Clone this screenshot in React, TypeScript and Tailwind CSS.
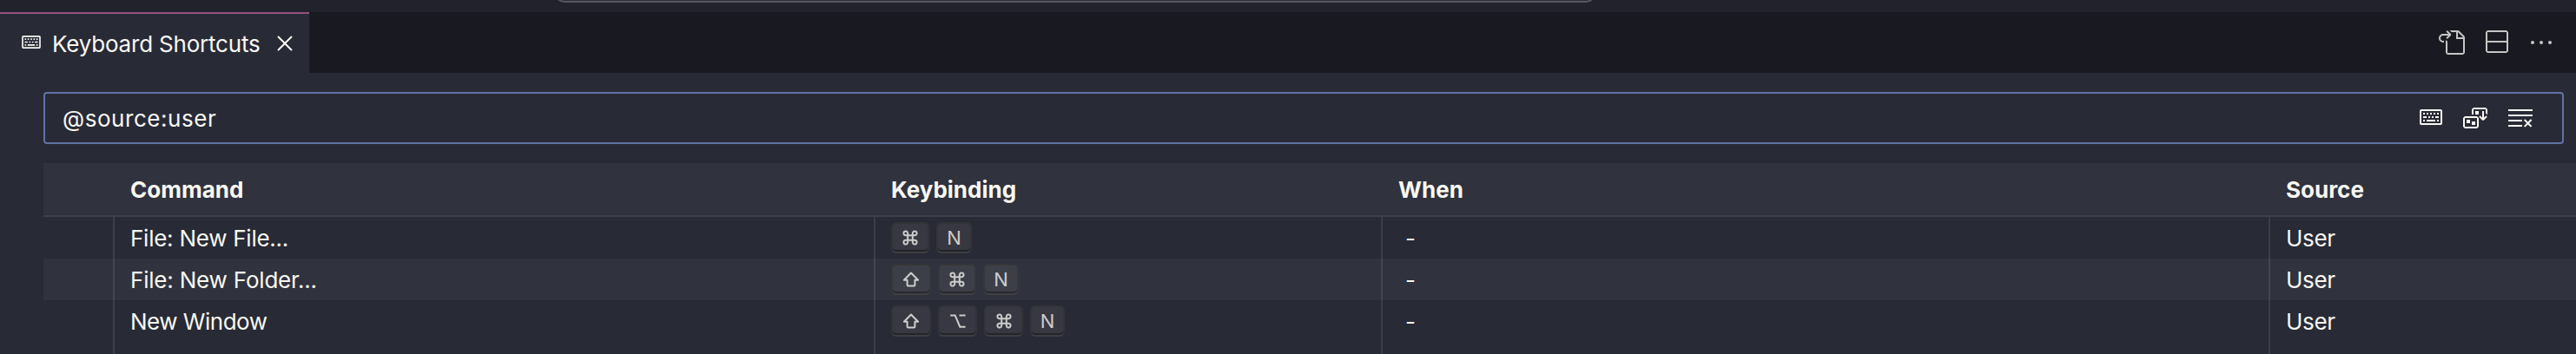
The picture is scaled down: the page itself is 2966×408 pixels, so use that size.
import { VscClose, VscGoToFile, VscSplitVertical, VscEllipsis, VscSortPrecedence, VscClearAll } from "react-icons/vsc";

type Binding = { command: string; tracking: string; keys: { label: string; width: string }[]; source: string };

const bindings: Binding[] = [
  {
    command: "File: New File...",
    tracking: "tracking-[-0.25px]",
    keys: [{ label: "⌘", width: "w-11" }, { label: "N", width: "w-[41px]" }],
    source: "User",
  },
  {
    command: "File: New Folder...",
    tracking: "tracking-[-0.2px]",
    keys: [{ label: "⇧", width: "w-[46px]" }, { label: "⌘", width: "w-11" }, { label: "N", width: "w-[41px]" }],
    source: "User",
  },
  {
    command: "New Window",
    tracking: "tracking-[-0.5px]",
    keys: [
      { label: "⇧", width: "w-[46px]" },
      { label: "⌥", width: "w-[45px]" },
      { label: "⌘", width: "w-[45px]" },
      { label: "N", width: "w-[40px]" },
    ],
    source: "User",
  },
];

function KeyboardIcon({ className }: { className: string }) {
  return (
    <svg viewBox="0 0 26 18" className={className} fill="none" stroke="currentColor" strokeWidth="2">
      <rect x="1" y="1" width="24" height="16" rx="1" />
      <path d="M4 5h2m2 0h2m2 0h2m2 0h2m2 0h2M4 9h4m2 0h2m2 0h2m2 0h4M4 13h2m2 0h10m2 0h2" />
    </svg>
  );
}

function KeyGlyph({ label }: { label: string }) {
  const common = "h-5 w-5 fill-none stroke-[#cccccc]";
  if (label === "⌘")
    return (
      <svg viewBox="0 0 20 20" className={common} strokeWidth="2">
        <path d="M7.2 7.2V4.9a2.4 2.4 0 1 0-2.4 2.3h10.4a2.4 2.4 0 1 0-2.4-2.3v10.2a2.4 2.4 0 1 0 2.4-2.3H4.8a2.4 2.4 0 1 0 2.4 2.3z" />
      </svg>
    );
  if (label === "⇧")
    return (
      <svg viewBox="0 0 20 20" className={common} strokeWidth="2" strokeLinejoin="round">
        <path d="M10 2.5 1.900 10.800h3.700v5.700a.9.9 0 0 0 .9.9h7a.9.9 0 0 0 .9-.9v-5.700h3.700z" />
      </svg>
    );
  if (label === "⌥")
    return (
      <svg viewBox="0 0 20 20" className={common} strokeWidth="2">
        <path d="M1.2 3.500h5.500l5.600 13.200h6.300M11.500 3.500h7.100" />
      </svg>
    );
  return <span className="text-[22px] leading-5">{label}</span>;
}

function Key({ label, width }: { label: string; width: string }) {
  return (
    <span
      className={`${width} flex h-9 items-center justify-center rounded-[6px] border-2 border-[#33333399] border-b-[#44444499] bg-[#8080802b] text-[#cccccc] shadow-[inset_0_-2px_0_#0000005c]`}
    >
      <KeyGlyph label={label} />
    </span>
  );
}

const columns = "grid grid-cols-[82px_876px_584px_1022px_1fr]";

export default function App() {
  return (
    <div className="flex h-[408px] w-[2966px] flex-col overflow-hidden bg-[#282a36] font-['Inter',sans-serif] text-[26px] leading-8 text-[#f8f8f2]">
      <div className="flex h-3.5 shrink-0 bg-[#21222c] pl-[638px]">
        <div className="-mt-10 h-[43px] w-[1200px] rounded-[12px] border-2 border-[#55565e] bg-[#2d2e38]" />
      </div>
      <header className="flex h-[70px] shrink-0 justify-between bg-[#191a21]">
        <div className="flex w-[356px] items-center border-t-2 border-[#94527e] bg-[#282a36] pl-[25px]">
          <KeyboardIcon className="mb-[3px] h-[15px] w-[22px] shrink-0" />
          <span className="ml-[13px] w-[240px] pt-px tracking-[-0.2px] whitespace-nowrap">Keyboard Shortcuts</span>
          <VscClose className="ml-3 size-8 shrink-0" />
        </div>
        <div className="flex items-center gap-5 pr-6 text-[#c5c5c5]">
          <VscGoToFile className="size-8" />
          <VscSplitVertical className="size-8" />
          <VscEllipsis className="size-8" />
        </div>
      </header>
      <div className="mt-[22px] ml-[50px] flex h-[60px] w-[2902px] shrink-0 items-center justify-between rounded-[4px] border-2 border-[#6272a4] pr-8 pl-5">
        <span className="pt-0.5 tracking-[0.55px]">@source:user</span>
        <div className="flex items-center gap-5">
          <KeyboardIcon className="mr-0.5 mb-0.5 h-[18px] w-[26px]" />
          <VscSortPrecedence className="size-8" />
          <VscClearAll className="size-8" />
        </div>
      </div>
      <main className="mt-[22px] ml-[50px] flex grow flex-col">
        <div className={`${columns} h-[62px] shrink-0 items-center border-b-2 border-[#3e3f4a] bg-[#30323d] pt-0.5 font-bold`}>
          <span />
          <span className="pl-[18px]">Command</span>
          <span className="pl-[18px]">Keybinding</span>
          <span className="pl-[18px]">When</span>
          <span className="pl-[18px]">Source</span>
        </div>
        {bindings.map((b) => (
          <div key={b.command} className={`${columns} h-12 shrink-0 even:bg-[#282a36] odd:bg-[#30323d]`}>
            <div className="border-r-2 border-[#cccccc20]" />
            <div className={`${b.tracking} flex items-center border-r-2 border-[#cccccc20] pt-0.5 pl-[18px]`}>{b.command}</div>
            <div className="flex items-start gap-2 border-r-2 border-[#cccccc20] pt-1.5 pl-[18px]">
              {b.keys.map((k) => (
                <Key key={k.label} label={k.label} width={k.width} />
              ))}
            </div>
            <div className="flex items-center border-r-2 border-[#cccccc20] pt-px pl-[26px]">-</div>
            <div className="flex items-center pt-0.5 pl-[18px] tracking-[-0.3px]">{b.source}</div>
          </div>
        ))}
        <div className={`${columns} grow`}>
          <div className="border-r-2 border-[#cccccc20]" />
          <div className="border-r-2 border-[#cccccc20]" />
          <div className="border-r-2 border-[#cccccc20]" />
          <div className="border-r-2 border-[#cccccc20]" />
        </div>
      </main>
    </div>
  );
}
